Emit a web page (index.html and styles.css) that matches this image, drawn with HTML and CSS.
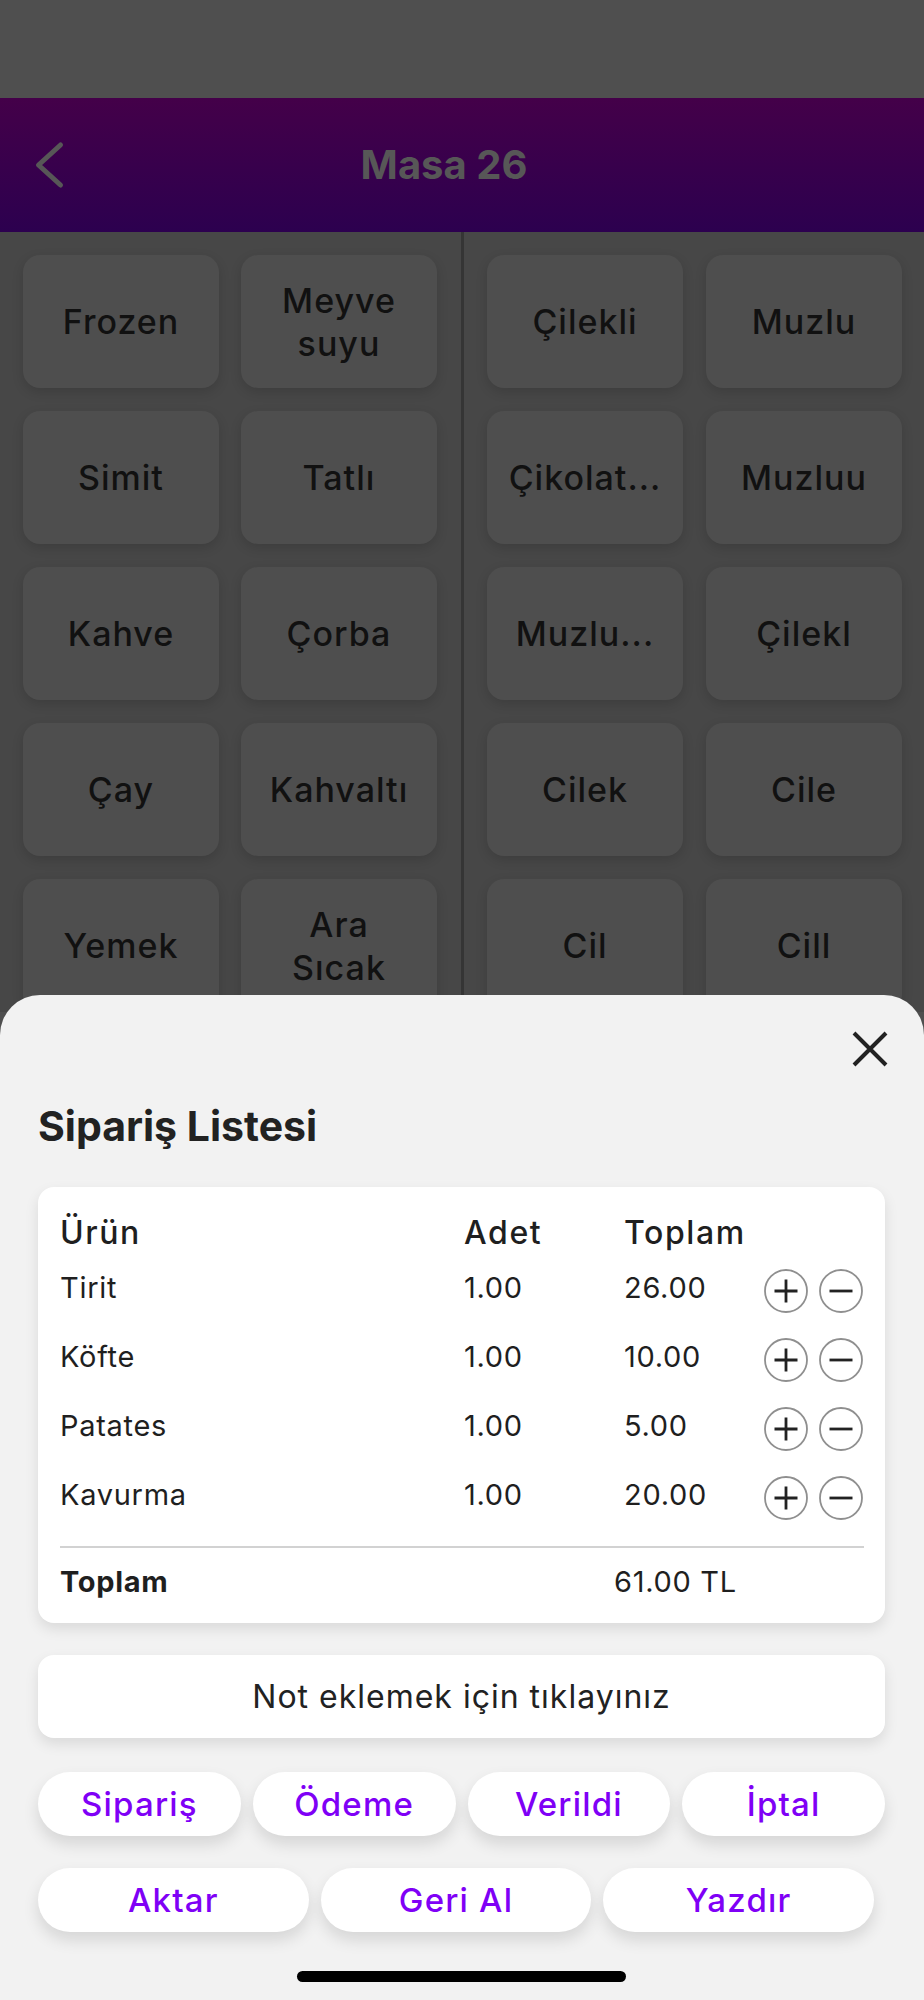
FILE: index.html
```html
<!DOCTYPE html>
<html lang="tr">
<head>
<meta charset="utf-8">
<title>Masa 26</title>
<link rel="stylesheet" href="styles.css">
</head>
<body>
<div class="screen">
  <div class="status"></div>
  <header class="nav">
    <svg class="back" viewBox="0 0 32 48" aria-hidden="true"><polyline points="26.5,4 4.5,24 26.5,44" fill="none" stroke="#575757" stroke-width="5" stroke-linecap="round" stroke-linejoin="round"/></svg>
    <h1 class="nav-title">Masa 26</h1>
    <span></span>
  </header>
  <main class="menu">
    <section class="panel panel-left">
      <div class="tile">Frozen</div>
      <div class="tile">Meyve<br>suyu</div>
      <div class="tile">Simit</div>
      <div class="tile">Tatlı</div>
      <div class="tile">Kahve</div>
      <div class="tile">Çorba</div>
      <div class="tile">Çay</div>
      <div class="tile">Kahvaltı</div>
      <div class="tile">Yemek</div>
      <div class="tile">Ara<br>Sıcak</div>
    </section>
    <div class="divider"></div>
    <section class="panel panel-right">
      <div class="tile">Çilekli</div>
      <div class="tile">Muzlu</div>
      <div class="tile">Çikolat...</div>
      <div class="tile">Muzluu</div>
      <div class="tile">Muzlu...</div>
      <div class="tile">Çilekl</div>
      <div class="tile">Cilek</div>
      <div class="tile">Cile</div>
      <div class="tile">Cil</div>
      <div class="tile">Cill</div>
    </section>
  </main>

  <div class="sheet">
    <div class="sheet-top">
      <svg class="close" viewBox="0 0 36 36" aria-hidden="true"><path d="M2 2L34 34M34 2L2 34" stroke="#222" stroke-width="4" fill="none"/></svg>
    </div>
    <h2 class="sheet-title">Sipariş Listesi</h2>

    <div class="card order">
      <div class="row head">
        <span class="c-name">Ürün</span><span class="c-qty">Adet</span><span class="c-sum">Toplam</span>
      </div>
      <div class="row item">
        <span class="c-name">Tirit</span><span class="c-qty">1.00</span><span class="c-sum">26.00</span>
        <span class="steppers">
          <svg class="step" viewBox="0 0 44 44"><circle cx="22" cy="22" r="21" fill="none" stroke="#8f8f8f" stroke-width="1.8"/><path d="M10.5 22H33.5M22 10.5V33.5" stroke="#222" stroke-width="2.8"/></svg>
          <svg class="step" viewBox="0 0 44 44"><circle cx="22" cy="22" r="21" fill="none" stroke="#8f8f8f" stroke-width="1.8"/><path d="M10.5 22H33.5" stroke="#222" stroke-width="2.8"/></svg>
        </span>
      </div>
      <div class="row item">
        <span class="c-name">Köfte</span><span class="c-qty">1.00</span><span class="c-sum">10.00</span>
        <span class="steppers">
          <svg class="step" viewBox="0 0 44 44"><circle cx="22" cy="22" r="21" fill="none" stroke="#8f8f8f" stroke-width="1.8"/><path d="M10.5 22H33.5M22 10.5V33.5" stroke="#222" stroke-width="2.8"/></svg>
          <svg class="step" viewBox="0 0 44 44"><circle cx="22" cy="22" r="21" fill="none" stroke="#8f8f8f" stroke-width="1.8"/><path d="M10.5 22H33.5" stroke="#222" stroke-width="2.8"/></svg>
        </span>
      </div>
      <div class="row item">
        <span class="c-name">Patates</span><span class="c-qty">1.00</span><span class="c-sum">5.00</span>
        <span class="steppers">
          <svg class="step" viewBox="0 0 44 44"><circle cx="22" cy="22" r="21" fill="none" stroke="#8f8f8f" stroke-width="1.8"/><path d="M10.5 22H33.5M22 10.5V33.5" stroke="#222" stroke-width="2.8"/></svg>
          <svg class="step" viewBox="0 0 44 44"><circle cx="22" cy="22" r="21" fill="none" stroke="#8f8f8f" stroke-width="1.8"/><path d="M10.5 22H33.5" stroke="#222" stroke-width="2.8"/></svg>
        </span>
      </div>
      <div class="row item">
        <span class="c-name">Kavurma</span><span class="c-qty">1.00</span><span class="c-sum">20.00</span>
        <span class="steppers">
          <svg class="step" viewBox="0 0 44 44"><circle cx="22" cy="22" r="21" fill="none" stroke="#8f8f8f" stroke-width="1.8"/><path d="M10.5 22H33.5M22 10.5V33.5" stroke="#222" stroke-width="2.8"/></svg>
          <svg class="step" viewBox="0 0 44 44"><circle cx="22" cy="22" r="21" fill="none" stroke="#8f8f8f" stroke-width="1.8"/><path d="M10.5 22H33.5" stroke="#222" stroke-width="2.8"/></svg>
        </span>
      </div>
      <div class="rule"></div>
      <div class="total">
        <span class="t-label">Toplam</span><span class="t-value">61.00 TL</span>
      </div>
    </div>

    <div class="card note">Not eklemek için tıklayınız</div>

    <div class="actions actions-four">
      <button class="pill">Sipariş</button>
      <button class="pill">Ödeme</button>
      <button class="pill">Verildi</button>
      <button class="pill">İptal</button>
    </div>
    <div class="actions actions-three">
      <button class="pill">Aktar</button>
      <button class="pill">Geri Al</button>
      <button class="pill">Yazdır</button>
    </div>
    <div class="home-bar"></div>
  </div>
</div>
</body>
</html>
```

FILE: styles.css
```css
* {
  box-sizing: border-box;
  margin: 0;
  padding: 0;
}

body {
  margin: 0;
  background: #f2f2f2;
  font-family: Inter, "Noto Sans", sans-serif;
  color: #1f1f1f;
}

.screen {
  position: relative;
  width: 924px;
  height: 2000px;
  overflow: hidden;
  background: #4f4f4f;
}

.status {
  height: 98px;
  background: #4f4f4f;
}

.nav {
  height: 134px;
  display: grid;
  grid-template-columns: 80px 1fr 116px;
  align-items: center;
  background: linear-gradient(#440049, #2c004f);
}

.back {
  display: block;
  width: 32px;
  height: 48px;
  margin-left: 34px;
}

.nav-title {
  text-align: center;
  font-size: 40px;
  line-height: 48px;
  font-weight: 700;
  color: #575757;
}

.menu {
  display: flex;
  height: 780px;
  background: #474747;
}

.panel {
  display: grid;
  grid-template-columns: 196px 196px;
  grid-auto-rows: 133px;
  row-gap: 23px;
  align-content: start;
  padding: 23px 0 0 23px;
}

.panel-left {
  width: 461px;
  column-gap: 22px;
}

.panel-right {
  flex: 1;
  column-gap: 23px;
}

.divider {
  width: 3px;
  background: #353535;
}

.tile {
  display: flex;
  align-items: center;
  justify-content: center;
  text-align: center;
  background: #4e4e4e;
  border-radius: 17px;
  box-shadow: 0 4px 12px rgba(0, 0, 0, 0.14);
  font-size: 34px;
  font-weight: 500;
  letter-spacing: 1px;
  line-height: 43px;
  color: #111;
}

.sheet {
  position: absolute;
  left: 0;
  right: 0;
  top: 995px;
  bottom: 0;
  display: flex;
  flex-direction: column;
  padding: 36px 39px 0 38px;
  background: #f2f2f2;
  border-radius: 40px 40px 0 0;
}

.sheet-top {
  display: flex;
  justify-content: flex-end;
  height: 36px;
}

.close {
  display: block;
  width: 36px;
  height: 36px;
  margin-right: -3px;
}

.sheet-title {
  margin-top: 34px;
  font-size: 41px;
  line-height: 50px;
  font-weight: 700;
  color: #222;
}

.card {
  background: #fff;
  border-radius: 16px;
  box-shadow: 0 6px 14px rgba(0, 0, 0, 0.10);
}

.order {
  margin-top: 36px;
  padding: 25px 21px 21px 22px;
}

.row {
  display: flex;
  align-items: flex-start;
}

.head {
  height: 41px;
  font-size: 32px;
  line-height: 41px;
  font-weight: 500;
  letter-spacing: 1.6px;
}

.item {
  height: 69px;
  font-size: 29px;
  line-height: 69px;
  letter-spacing: 0.7px;
}

.c-name {
  width: 404px;
}

.c-qty {
  width: 160px;
}

.c-sum {
  width: 140px;
}

.steppers {
  display: flex;
  gap: 11px;
  margin-top: 16px;
}

.step {
  display: block;
  width: 44px;
  height: 44px;
}

.rule {
  height: 2px;
  margin-top: 17px;
  background: #d2d2d2;
}

.total {
  display: flex;
  margin-top: 14px;
  font-size: 29px;
  line-height: 40px;
  letter-spacing: 0.7px;
}

.t-label {
  width: 554px;
  font-weight: 700;
}

.note {
  margin-top: 32px;
  height: 83px;
  text-align: center;
  font-size: 32px;
  line-height: 83px;
  letter-spacing: 1px;
  color: #222;
}

.actions {
  display: flex;
  gap: 12px;
}

.actions-four {
  margin-top: 34px;
}

.actions-three {
  margin-top: 32px;
  padding-right: 11px;
}

.pill {
  flex: 1;
  height: 64px;
  border: none;
  border-radius: 32px;
  background: #fff;
  box-shadow: 0 8px 16px rgba(0, 0, 0, 0.12);
  font-family: Inter, "Noto Sans", sans-serif;
  font-size: 33px;
  font-weight: 500;
  letter-spacing: 1.2px;
  line-height: 64px;
  color: #7f00f6;
}

.home-bar {
  align-self: center;
  width: 329px;
  height: 11px;
  margin-top: 39px;
  border-radius: 6px;
  background: #000;
}
```
